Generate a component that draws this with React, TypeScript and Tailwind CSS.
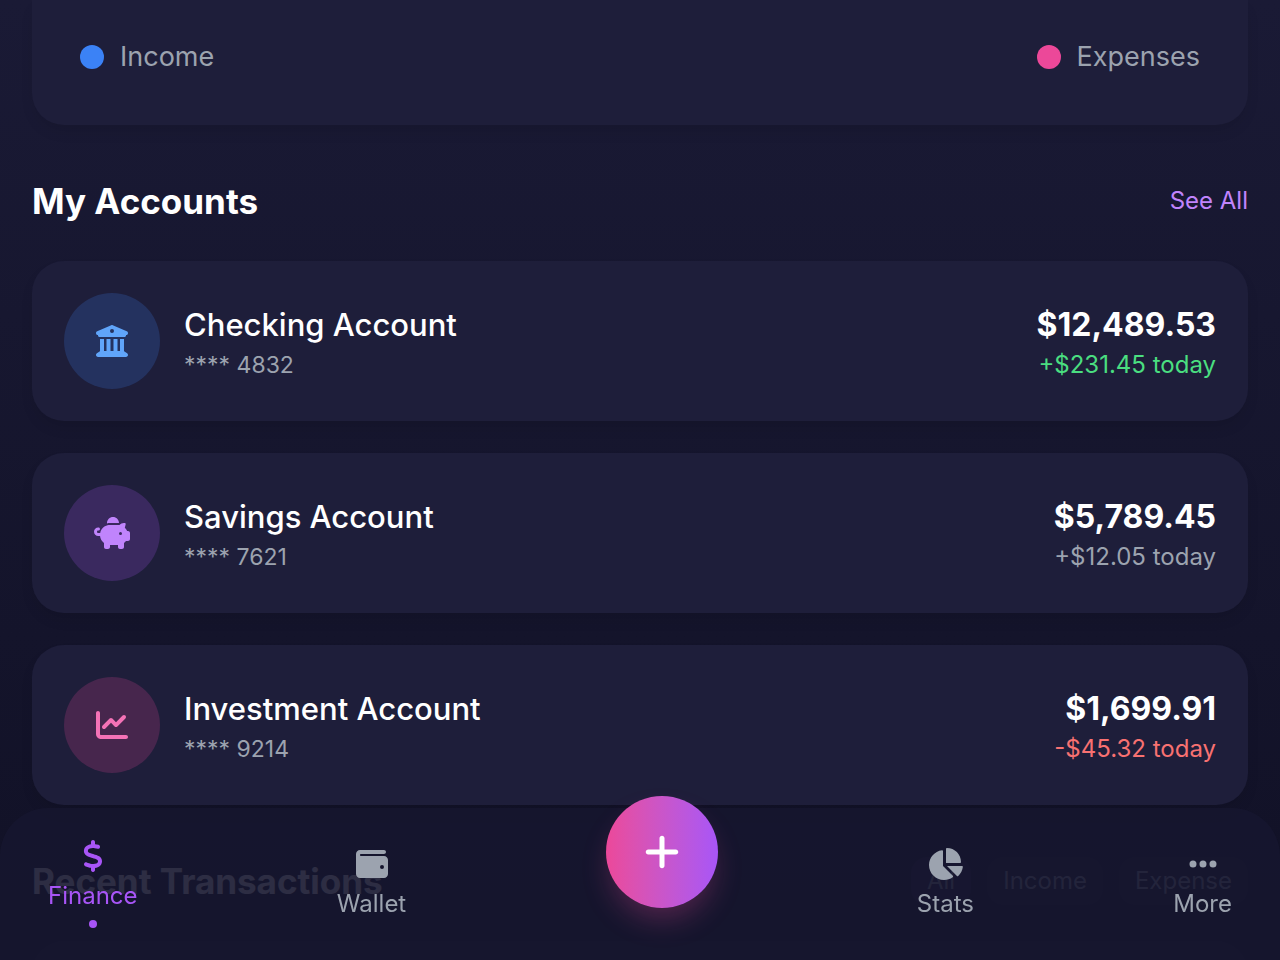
import type { IconType } from "react-icons";
import {
  FaBuildingColumns,
  FaChartLine,
  FaChartPie,
  FaDollarSign,
  FaEllipsis,
  FaPiggyBank,
  FaPlus,
  FaWallet,
} from "react-icons/fa6";

type Account = {
  name: string;
  number: string;
  balance: string;
  change: string;
  changeClass: string;
  icon: IconType;
  iconClass: string;
};

const accounts: Account[] = [
  {
    name: "Checking Account",
    number: "**** 4832",
    balance: "$12,489.53",
    change: "+$231.45 today",
    changeClass: "text-[#4ade80]",
    icon: FaBuildingColumns,
    iconClass: "bg-[#3b82f6]/20 text-[#60a5fa]",
  },
  {
    name: "Savings Account",
    number: "**** 7621",
    balance: "$5,789.45",
    change: "+$12.05 today",
    changeClass: "text-[#9ca3af]",
    icon: FaPiggyBank,
    iconClass: "bg-[#a855f7]/20 text-[#c084fc]",
  },
  {
    name: "Investment Account",
    number: "**** 9214",
    balance: "$1,699.91",
    change: "-$45.32 today",
    changeClass: "text-[#f87171]",
    icon: FaChartLine,
    iconClass: "bg-[#ec4899]/20 text-[#f472b6]",
  },
];

function AccountCard({ account }: { account: Account }) {
  const Icon = account.icon;
  return (
    <li className="flex items-center justify-between rounded-4xl bg-[#1e1e3a] p-8 shadow-[0_8px_16px_-4px_rgba(0,0,0,0.12)]">
      <div className="flex items-center gap-6">
        <div className={`flex size-24 items-center justify-center rounded-full ${account.iconClass}`}>
          <Icon className="h-8 w-9" />
        </div>
        <div>
          <h3 className="text-[31px] leading-12 font-medium">{account.name}</h3>
          <p className="text-[23px] leading-8 text-[#9ca3af]">{account.number}</p>
        </div>
      </div>
      <div className="text-right">
        <p className="text-[32px] leading-12 font-bold">{account.balance}</p>
        <p className={`text-[24px] leading-8 ${account.changeClass}`}>{account.change}</p>
      </div>
    </li>
  );
}

function NavItem({ label, icon: Icon, active = false }: { label: string; icon: IconType; active?: boolean }) {
  return (
    <a href="#" className={`flex flex-col items-center gap-2 ${active ? "text-[#a855f7]" : "text-[#9ca3af]"}`}>
      <Icon className="h-8 w-9" />
      <span className="text-[24px] leading-8">{label}</span>
      {active && <span className="size-2 rounded-full bg-[#a855f7]" />}
    </a>
  );
}

export default function App() {
  return (
    <div className="h-screen overflow-hidden bg-linear-to-b from-[#1a1a35] to-[#111126] font-['Inter',sans-serif] text-white">
      <main className="px-8">
        {/* Chart legend */}
        <section className="flex justify-between rounded-b-4xl bg-[#1e1e3a] px-12 pt-[37px] pb-12 shadow-[0_8px_16px_-4px_rgba(0,0,0,0.12)]">
          <div className="flex items-center gap-4">
            <span className="size-6 rounded-full bg-[#3b82f6]" />
            <span className="text-[27px] leading-10 text-[#9ca3af]">Income</span>
          </div>
          <div className="flex items-center gap-4">
            <span className="size-6 rounded-full bg-[#ec4899]" />
            <span className="text-[27px] leading-10 text-[#9ca3af]">Expenses</span>
          </div>
        </section>

        {/* Accounts */}
        <section className="pt-12">
          <div className="mb-8 flex items-center justify-between">
            <h2 className="text-[35px] leading-14 font-bold">My Accounts</h2>
            <a href="#" className="text-[24px] leading-8 text-[#c084fc]">See All</a>
          </div>
          <ul className="flex flex-col gap-8">
            {accounts.map((account) => (
              <AccountCard key={account.name} account={account} />
            ))}
          </ul>
        </section>

        {/* Transactions */}
        <section className="pt-12">
          <div className="mb-8 flex items-center justify-between">
            <h2 className="text-[35px] leading-14 font-bold">Recent Transactions</h2>
            <div className="flex gap-4 text-[24px] leading-8 text-[#9ca3af]">
              <button type="button" className="rounded-2xl bg-[#a855f7]/10 px-4 py-2">All</button>
              <button type="button" className="rounded-2xl bg-[#1e1e3a]/30 px-4 py-2">Income</button>
              <button type="button" className="rounded-2xl bg-[#1e1e3a]/30 px-4 py-2">Expense</button>
            </div>
          </div>
          <div className="h-40 rounded-4xl bg-[#1e1e3a]/50" />
        </section>
      </main>

      {/* Bottom navigation */}
      <nav className="fixed inset-x-0 bottom-0 flex items-center justify-between rounded-t-[48px] bg-[#16162f]/90 px-12 py-8">
        <NavItem label="Finance" icon={FaDollarSign} active />
        <NavItem label="Wallet" icon={FaWallet} />
        <button
          type="button"
          aria-label="Add"
          className="-mt-16 flex size-28 items-center justify-center rounded-full bg-linear-to-r from-[#ec4899] to-[#a855f7] shadow-[0_16px_30px_-6px_rgba(236,72,153,0.3)]"
        >
          <FaPlus className="size-10" />
        </button>
        <NavItem label="Stats" icon={FaChartPie} />
        <NavItem label="More" icon={FaEllipsis} />
      </nav>
    </div>
  );
}
